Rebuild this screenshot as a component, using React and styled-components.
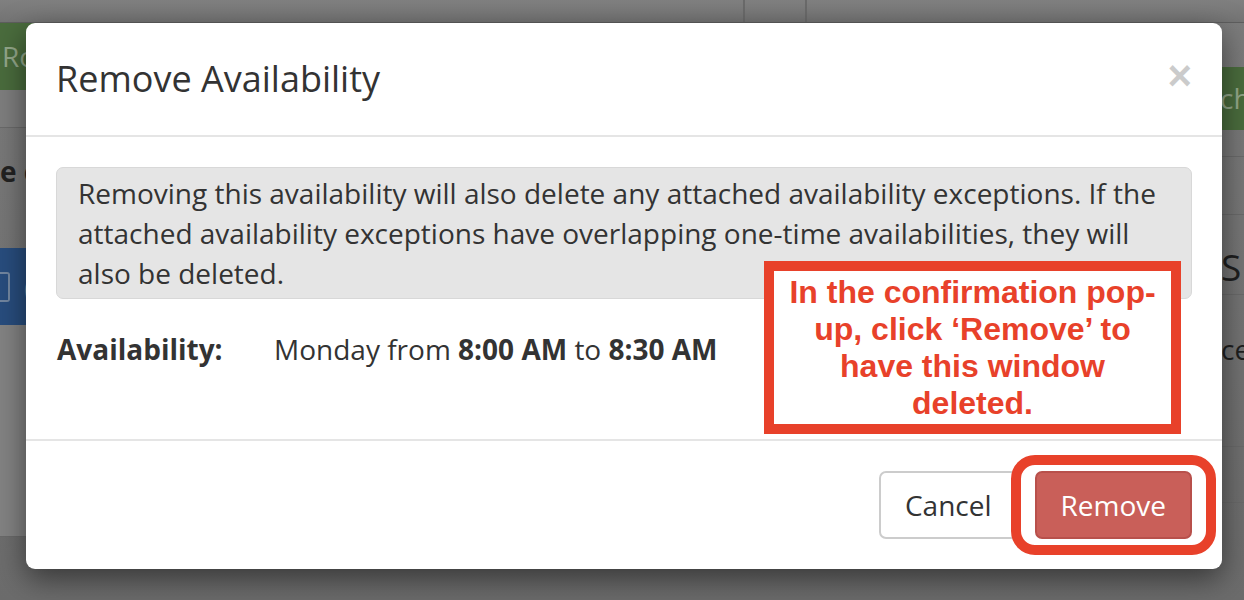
import React from "react";
import styled, { createGlobalStyle } from "styled-components";

const GlobalStyle = createGlobalStyle`
  html, body { margin: 0; padding: 0; }
  body {
    background: #767676;
    font-family: "Open Sans", "Noto Sans", sans-serif;
    -webkit-font-smoothing: antialiased;
  }
`;

const Page = styled.div`
  position: relative;
  width: 1244px;
  height: 600px;
  overflow: hidden;
  background: linear-gradient(#7c7c7c, #6c6c6c);
`;

/* ---------- dimmed page behind the modal ---------- */
const TopBar = styled.div`
  display: flex;
  height: 22px;
  background: linear-gradient(#808080, #747474);
  border-bottom: 1px solid #5e5e5e;
`;

const TopCell = styled.div`
  width: ${(p) => p.$w || "auto"};
  flex: ${(p) => (p.$w ? "none" : "1")};
  border-right: ${(p) => (p.$sep ? "2px solid #6a6a6a" : "none")};
`;

const Main = styled.div`
  display: flex;
  justify-content: space-between;
`;

const Rail = styled.div`
  display: flex;
  flex-direction: column;
  width: ${(p) => p.$w};
  padding-top: ${(p) => p.$top || "0"};
`;

const GreenBtn = styled.div`
  height: ${(p) => p.$h};
  background: #4a6c3d;
  color: #93a78a;
  font-size: 28px;
  line-height: ${(p) => p.$h};
  padding-left: ${(p) => p.$pl || "2px"};
  white-space: nowrap;
  overflow: hidden;
  border-radius: ${(p) => p.$r || "0"};
`;

const Band = styled.div`
  height: ${(p) => p.$h};
  background: ${(p) => p.$bg || "transparent"};
  border-bottom: ${(p) => (p.$line ? "1px solid #6a6a6a" : "none")};
  color: ${(p) => p.$color || "#222"};
  font-size: ${(p) => p.$fs || "28px"};
  font-weight: ${(p) => p.$fw || 400};
  line-height: ${(p) => p.$lh || p.$h};
  padding-left: ${(p) => p.$pl || "0"};
  white-space: nowrap;
  overflow: hidden;
`;

const BlueBtn = styled.div`
  height: 77px;
  background: #284d7e;
  color: #7286a0;
  display: flex;
  align-items: center;
  gap: 14px;
  font-size: 26px;
  overflow: hidden;
`;

const PhoneIcon = styled.span`
  display: block;
  width: 8px;
  height: 26px;
  border: 2px solid #7286a0;
  border-left: none;
  border-radius: 0 3px 3px 0;
`;

/* ---------- modal ---------- */
const Modal = styled.div`
  position: absolute;
  left: 26px;
  top: 23px;
  width: 1196px;
  background: #fff;
  border-radius: 9px;
  box-shadow: 0 10px 30px rgba(0, 0, 0, 0.5);
  color: #333;
`;

const Header = styled.div`
  display: flex;
  justify-content: space-between;
  align-items: flex-start;
  padding: 30px;
  border-bottom: 2px solid #e5e5e5;
`;

const Title = styled.h4`
  margin: 0;
  font-size: 36px;
  font-weight: 400;
  line-height: 52px;
  color: #333;
`;

const Close = styled.button`
  border: 0;
  background: none;
  padding: 0;
  margin-top: 2px;
  font-family: "Liberation Sans", Arial, sans-serif;
  font-size: 42px;
  font-weight: 700;
  line-height: 42px;
  color: #000;
  opacity: 0.2;
  cursor: pointer;
`;

const Body = styled.div`
  padding: 30px 30px 70px;
`;

const Notice = styled.div`
  background: #e5e5e5;
  border: 1px solid #d8d8d8;
  border-radius: 7px;
  padding: 5px 21px;
  font-size: 28px;
  line-height: 40px;
  color: #333;
`;

const DetailRow = styled.div`
  display: flex;
  margin-top: 30px;
  font-size: 28px;
  line-height: 40px;
  padding-left: 1px;
`;

const Label = styled.div`
  width: 217px;
  font-weight: 700;
`;

const Footer = styled.div`
  display: flex;
  justify-content: flex-end;
  gap: 17px;
  padding: 30px;
  border-top: 2px solid #e5e5e5;
`;

const Button = styled.button`
  font-family: "Open Sans", sans-serif;
  font-size: 28px;
  line-height: 40px;
  padding: 12px 24px;
  border-radius: 7px;
  border: 2px solid ${(p) => (p.$danger ? "#b8504b" : "#cccccc")};
  background: ${(p) => (p.$danger ? "#c95f59" : "#fff")};
  color: ${(p) => (p.$danger ? "#fff" : "#333")};
  cursor: pointer;
`;

const Highlight = styled.div`
  position: relative;
  display: flex;
  &::after {
    content: "";
    position: absolute;
    left: -24px;
    right: -24px;
    top: -16px;
    bottom: -16px;
    border: 10px solid #e8412a;
    border-radius: 24px;
    pointer-events: none;
  }
`;

const Callout = styled.div`
  position: absolute;
  left: 764px;
  top: 261px;
  width: 417px;
  height: 173px;
  box-sizing: border-box;
  border: 10px solid #e8412a;
  background: #fff;
  display: flex;
  align-items: center;
  justify-content: center;
  text-align: center;
  font-family: "Liberation Sans", Arial, sans-serif;
  font-weight: 700;
  font-size: 32px;
  line-height: 37px;
  color: #e8412a;
  white-space: nowrap;
`;

export default function App() {
  return (
    <>
      <GlobalStyle />
      <Page>
        <TopBar>
          <TopCell $w="743px" $sep />
          <TopCell $w="60px" $sep />
          <TopCell />
        </TopBar>
        <Main>
          <Rail $w="110px">
            <GreenBtn $h="67px" $r="0 12px 0 0">Ro</GreenBtn>
            <Band $h="37px" $bg="#7e7e7e" $line />
            <Band $h="120px" $fw={700} $lh="86px">e c</Band>
            <BlueBtn>
              <PhoneIcon />
              <span>(</span>
            </BlueBtn>
            <Band $h="211px" $bg="#838383" $line />
          </Rail>
          <Rail $w="40px" $top="44px">
            <GreenBtn $h="63px" $pl="6px">tch</GreenBtn>
            <Band $h="26px" $line />
            <Band $h="57px" $line />
            <Band $h="79px" $fs="37px" $lh="104px" $pl="17px" $color="#1f1f1f" $line>
              S
            </Band>
            <Band $h="151px" $fs="28px" $lh="108px" $pl="17px" $color="#1f1f1f" $line>
              ce
            </Band>
            <Band $h="55px" $line />
          </Rail>
        </Main>

        <Modal>
          <Header>
            <Title>Remove Availability</Title>
            <Close aria-label="Close">×</Close>
          </Header>
          <Body>
            <Notice>
              Removing this availability will also delete any attached availability
              exceptions. If the attached availability exceptions have overlapping
              one-time availabilities, they will also be deleted.
            </Notice>
            <DetailRow>
              <Label>Availability:</Label>
              <div>
                Monday from <b>8:00 AM</b> to <b>8:30 AM</b>
              </div>
            </DetailRow>
          </Body>
          <Footer>
            <Button>Cancel</Button>
            <Highlight>
              <Button $danger>Remove</Button>
            </Highlight>
          </Footer>
        </Modal>

        <Callout>
          In the confirmation pop-
          <br />
          up, click ‘Remove’ to
          <br />
          have this window
          <br />
          deleted.
        </Callout>
      </Page>
    </>
  );
}
